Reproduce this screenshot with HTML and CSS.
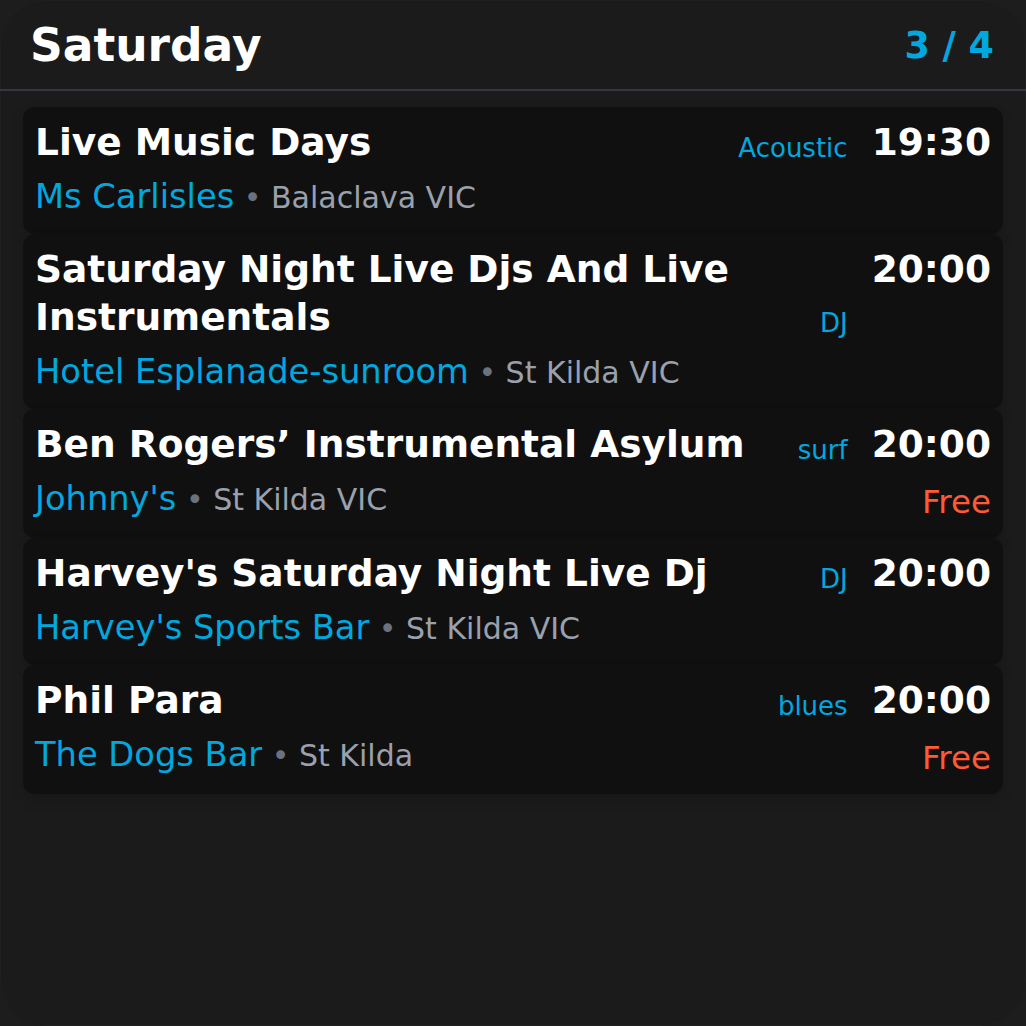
FILE: index.html
```html
<!DOCTYPE html>
<html lang="en">
<head>
<meta charset="utf-8">
<title>Saturday</title>
<link rel="stylesheet" href="styles.css">
</head>
<body>
<div class="screen">
  <header class="header">
    <h1 class="day">Saturday</h1>
    <div class="counter">3 / 4</div>
  </header>
  <main class="list">
    <article class="card">
      <div class="top">
        <div class="title">Live Music Days</div>
        <div class="tag">Acoustic</div>
        <div class="time">19:30</div>
      </div>
      <div class="bottom">
        <div class="place"><span class="venue">Ms Carlisles</span><span class="loc"> <span class="dot">•</span> Balaclava VIC</span></div>
      </div>
    </article>
    <article class="card">
      <div class="top">
        <div class="title">Saturday Night Live Djs And Live Instrumentals</div>
        <div class="tag">DJ</div>
        <div class="time">20:00</div>
      </div>
      <div class="bottom">
        <div class="place"><span class="venue">Hotel Esplanade-sunroom</span><span class="loc"> <span class="dot">•</span> St Kilda VIC</span></div>
      </div>
    </article>
    <article class="card">
      <div class="top">
        <div class="title">Ben Rogers’ Instrumental Asylum</div>
        <div class="tag">surf</div>
        <div class="time">20:00</div>
      </div>
      <div class="bottom">
        <div class="place"><span class="venue">Johnny's</span><span class="loc"> <span class="dot">•</span> St Kilda VIC</span></div>
        <div class="price">Free</div>
      </div>
    </article>
    <article class="card">
      <div class="top">
        <div class="title">Harvey's Saturday Night Live Dj</div>
        <div class="tag">DJ</div>
        <div class="time">20:00</div>
      </div>
      <div class="bottom">
        <div class="place"><span class="venue">Harvey's Sports Bar</span><span class="loc"> <span class="dot">•</span> St Kilda VIC</span></div>
      </div>
    </article>
    <article class="card">
      <div class="top">
        <div class="title">Phil Para</div>
        <div class="tag">blues</div>
        <div class="time">20:00</div>
      </div>
      <div class="bottom">
        <div class="place"><span class="venue">The Dogs Bar</span><span class="loc"> <span class="dot">•</span> St Kilda</span></div>
        <div class="price">Free</div>
      </div>
    </article>
  </main>
</div>
</body>
</html>
```

FILE: styles.css
```css
* {
  box-sizing: border-box;
}

html, body {
  margin: 0;
  padding: 0;
  background: #1d1d1d;
}

body {
  font-family: "DejaVu Sans", "Liberation Sans", sans-serif;
  color: #ffffff;
}

.screen {
  width: 1026px;
  height: 1026px;
  background: #1b1b1b;
  border-radius: 44px;
  box-shadow: inset 0 0 0 1px rgba(255, 255, 255, 0.025);
  overflow: hidden;
}

.header {
  height: 91px;
  display: flex;
  align-items: center;
  justify-content: space-between;
  padding: 2px 32px 0 30px;
  border-bottom: 2px solid #343843;
}

.day {
  margin: 0;
  font-size: 45.5px;
  font-weight: bold;
  line-height: 52px;
  color: #ffffff;
}

.counter {
  font-size: 36.5px;
  font-weight: bold;
  line-height: 44px;
  color: #00a8df;
}

.list {
  padding: 16px 23px 0 23px;
  display: flex;
  flex-direction: column;
}

.card {
  background: #101010;
  border-radius: 12px;
  padding: 11px 12px 15px 12px;
  box-shadow: 0 6px 14px rgba(0, 0, 0, 0.12);
}

.top {
  display: flex;
  align-items: flex-start;
}

.title {
  flex: 1;
  min-width: 0;
  margin-right: 16px;
  font-size: 37.5px;
  font-weight: bold;
  line-height: 48px;
  color: #ffffff;
}

.tag {
  align-self: flex-end;
  margin-bottom: 3px;
  margin-right: 24px;
  font-size: 26px;
  line-height: 30px;
  color: #00a8df;
}

.time {
  font-size: 37.5px;
  font-weight: bold;
  line-height: 48px;
  color: #ffffff;
}

.bottom {
  display: flex;
  align-items: flex-start;
  justify-content: space-between;
  margin-top: 10px;
}

.place {
  font-size: 33.7px;
  line-height: 42px;
}

.venue {
  font-size: 33.7px;
  color: #00a8df;
}

.loc {
  font-size: 30px;
  color: #9aa0ac;
}

.dot {
  color: #6b717d;
}

.price {
  margin-top: 3px;
  font-size: 32.5px;
  line-height: 42px;
  color: #ff5a36;
}
```
